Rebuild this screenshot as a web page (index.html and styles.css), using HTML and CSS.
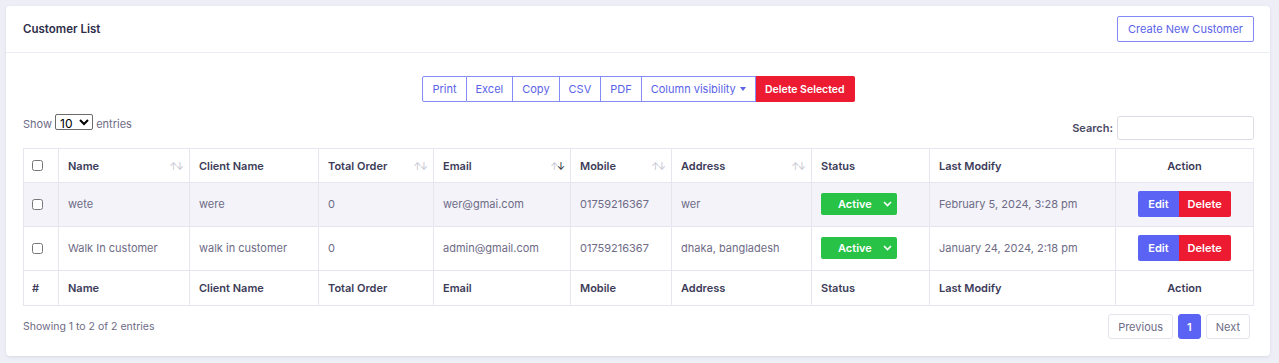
FILE: index.html
```html
<!DOCTYPE html>
<html lang="en">
<head>
  <meta charset="UTF-8">
  <meta name="viewport" content="width=device-width, initial-scale=1.0">
  <title>Customer List</title>
  <link rel="stylesheet" href="styles.css">
</head>
<body>
  <div class="card">
    <div class="card-header">
      <h4>Customer List</h4>
      <a href="#" class="btn-outline">Create New Customer</a>
    </div>
    <div class="card-body">
      <div class="dt-buttons">
        <button>Print</button>
        <button>Excel</button>
        <button>Copy</button>
        <button>CSV</button>
        <button>PDF</button>
        <button>Column visibility <span class="caret"></span></button>
        <button class="danger">Delete Selected</button>
      </div>
      <div class="dt-top">
        <label class="length">Show
          <select>
            <option>10</option>
            <option>25</option>
            <option>50</option>
          </select>
          entries</label>
        <label class="search">Search: <input type="text"></label>
      </div>
      <table class="dt">
        <thead>
          <tr>
            <th class="c-check"><input type="checkbox"></th>
            <th class="c-name sort">Name <i class="arr"><b>&uarr;</b><b>&darr;</b></i></th>
            <th class="c-client">Client Name</th>
            <th class="c-order sort">Total Order <i class="arr"><b>&uarr;</b><b>&darr;</b></i></th>
            <th class="c-email sort">Email <i class="arr desc"><b>&uarr;</b><b>&darr;</b></i></th>
            <th class="c-mobile sort">Mobile <i class="arr"><b>&uarr;</b><b>&darr;</b></i></th>
            <th class="c-address sort">Address <i class="arr"><b>&uarr;</b><b>&darr;</b></i></th>
            <th class="c-status">Status</th>
            <th class="c-modify">Last Modify</th>
            <th class="c-action">Action</th>
          </tr>
        </thead>
        <tbody>
          <tr class="odd">
            <td class="c-check"><input type="checkbox"></td>
            <td>wete</td>
            <td>were</td>
            <td>0</td>
            <td>wer@gmai.com</td>
            <td>01759216367</td>
            <td>wer</td>
            <td><span class="status">Active <svg width="9" height="6" viewBox="0 0 9 6"><path d="M1 1l3.5 3.5L8 1" fill="none" stroke="#fff" stroke-width="1.6"/></svg></span></td>
            <td>February 5, 2024, 3:28 pm</td>
            <td class="c-action"><span class="actions"><a href="#" class="edit">Edit</a><a href="#" class="del">Delete</a></span></td>
          </tr>
          <tr>
            <td class="c-check"><input type="checkbox"></td>
            <td>Walk In customer</td>
            <td>walk in customer</td>
            <td>0</td>
            <td>admin@gmail.com</td>
            <td>01759216367</td>
            <td>dhaka, bangladesh</td>
            <td><span class="status">Active <svg width="9" height="6" viewBox="0 0 9 6"><path d="M1 1l3.5 3.5L8 1" fill="none" stroke="#fff" stroke-width="1.6"/></svg></span></td>
            <td>January 24, 2024, 2:18 pm</td>
            <td class="c-action"><span class="actions"><a href="#" class="edit">Edit</a><a href="#" class="del">Delete</a></span></td>
          </tr>
        </tbody>
        <tfoot>
          <tr>
            <th class="c-check">#</th>
            <th>Name</th>
            <th>Client Name</th>
            <th>Total Order</th>
            <th>Email</th>
            <th>Mobile</th>
            <th>Address</th>
            <th>Status</th>
            <th>Last Modify</th>
            <th class="c-action">Action</th>
          </tr>
        </tfoot>
      </table>
      <div class="dt-bottom">
        <div class="info">Showing 1 to 2 of 2 entries</div>
        <div class="paging">
          <a href="#" class="pg">Previous</a>
          <a href="#" class="pg current">1</a>
          <a href="#" class="pg">Next</a>
        </div>
      </div>
    </div>
  </div>
</body>
</html>
```

FILE: styles.css
```css
* {
  margin: 0;
  padding: 0;
  box-sizing: border-box;
}
body {
  font-family: 'Inter', 'Liberation Sans', sans-serif;
  font-size: 11px;
  color: #6e6b86;
  background-color: #eeeff6;
  padding: 6px 9px 8px 6px;
}
.card {
  background: #fff;
  border-radius: 4px;
  box-shadow: 0 1px 3px rgba(60, 60, 110, 0.12);
}
.card-header {
  display: flex;
  justify-content: space-between;
  align-items: center;
  height: 47px;
  padding: 0 16px 0 17px;
  border-bottom: 1px solid #eceef5;
}
.card-header h4 {
  font-size: 11.5px;
  font-weight: 600;
  color: #2e2d4a;
}
.btn-outline {
  display: inline-block;
  height: 26px;
  line-height: 24px;
  padding: 0 10px;
  border: 1px solid #8289f5;
  border-radius: 2px;
  color: #5a62e8;
  text-decoration: none;
  font-size: 11px;
}
.card-body {
  padding: 23px 16px 17px 17px;
}
.dt-buttons {
  display: flex;
  justify-content: center;
  margin-left: 0;
}
.dt-buttons button {
  font-family: inherit;
  font-size: 11px;
  height: 26px;
  padding: 0 9px;
  background: #fff;
  color: #5a62e8;
  border: 1px solid #858cf3;
  border-left: none;
  cursor: pointer;
}
.dt-buttons button:first-child {
  border-left: 1px solid #858cf3;
  border-radius: 2px 0 0 2px;
}
.dt-buttons button.danger {
  background: #ec1b32;
  border-color: #ec1b32;
  color: #fff;
  font-weight: 600;
  font-size: 10.5px;
  border-radius: 0 2px 2px 0;
}
.caret {
  display: inline-block;
  width: 0;
  height: 0;
  margin-left: 1px;
  vertical-align: 2px;
  border-top: 4px solid #5a62e8;
  border-left: 3px solid transparent;
  border-right: 3px solid transparent;
}
.dt-top {
  display: flex;
  justify-content: space-between;
  align-items: flex-start;
  margin-top: 12px;
  height: 34px;
}
.length select {
  font-family: inherit;
  font-size: 12px;
  height: 16px;
  width: 38px;
  color: #000;
  border: 1px solid #6b6b6b;
  border-radius: 2px;
  background: #fff;
}
.search {
  display: flex;
  align-items: center;
  gap: 4px;
  margin-top: 2px;
  font-weight: 600;
  color: #4a4965;
}
.search input {
  width: 137px;
  height: 24px;
  border: 1px solid #dcdce6;
  border-radius: 3px;
}
.dt {
  width: 100%;
  border-collapse: collapse;
  border: 1px solid #e3e3ee;
}
.dt th,
.dt td {
  border: 1px solid #e6e6f0;
  text-align: left;
  padding: 0 9px;
  vertical-align: middle;
}
.dt th {
  font-weight: 600;
  color: #3c3b58;
  height: 34px;
}
.dt td {
  height: 44px;
  padding-bottom: 2px;
}
.dt tbody tr.odd {
  background: #f3f3f9;
}
.dt tfoot th {
  height: 35px;
}
.c-check { width: 35px; }
.c-name { width: 131px; }
.c-client { width: 129px; }
.c-order { width: 115px; }
.c-email { width: 137px; }
.c-mobile { width: 101px; }
.c-address { width: 140px; }
.c-status { width: 118px; }
.c-modify { width: 186px; }
.dt .c-action { text-align: center; }
.dt th.c-check,
.dt td.c-check {
  padding: 0 0 0 8px;
}
.dt input[type="checkbox"] {
  width: 11px;
  height: 11px;
  margin-top: 3px;
}
.sort {
  position: relative;
}
.arr {
  position: absolute;
  right: 7px;
  top: 11px;
  font-style: normal;
  font-size: 10px;
  line-height: 12px;
  letter-spacing: -2px;
  color: #c6c6d2;
  font-weight: 400;
}
.arr.desc b:last-child {
  color: #1f1e33;
}
.arr b {
  font-weight: 400;
}
.status {
  display: inline-flex;
  justify-content: space-between;
  align-items: center;
  width: 76px;
  height: 22px;
  padding: 0 5px 0 17px;
  background: #28c247;
  color: #fff;
  font-weight: 600;
  border-radius: 2px;
}
.actions {
  display: inline-flex;
  height: 26px;
  border-radius: 2px;
  overflow: hidden;
}
.actions a {
  display: flex;
  align-items: center;
  color: #fff;
  text-decoration: none;
  font-weight: 600;
}
.actions .edit {
  background: #5a63f4;
  padding: 0 10px 0 10px;
}
.actions .del {
  background: #ec1b32;
  padding: 0 9px;
}
.dt-bottom {
  display: flex;
  justify-content: space-between;
  align-items: center;
  margin-top: 8px;
}
.info {
  font-size: 10.5px;
}
.paging {
  display: flex;
  gap: 5px;
  margin-right: 4px;
}
.pg {
  display: flex;
  align-items: center;
  height: 25px;
  padding: 0 9px;
  border: 1px solid #e4e4ee;
  border-radius: 3px;
  color: #6e6b86;
  text-decoration: none;
  font-size: 11px;
}
.pg.current {
  background: #5a63f4;
  border-color: #5a63f4;
  color: #fff;
  font-weight: 600;
  padding: 0 8px;
}
```
